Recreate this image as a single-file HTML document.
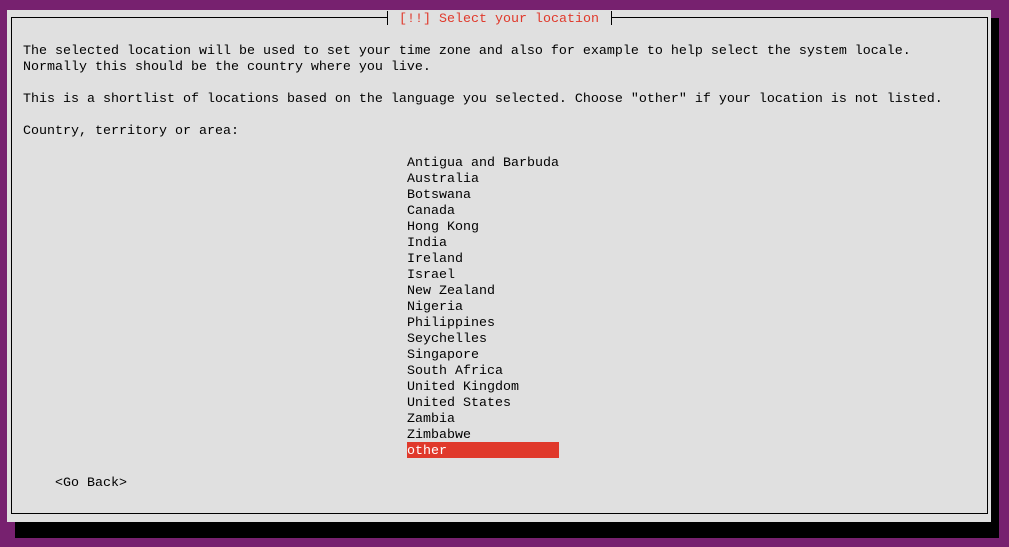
<!DOCTYPE html>
<html><head><meta charset="utf-8"><style>
html,body{margin:0;padding:0;}
body{width:1009px;height:547px;background:#77216f;position:relative;overflow:hidden;
font-family:"Liberation Mono","DejaVu Sans Mono",monospace;font-size:13.33px;line-height:16px;color:#000;}
.sh{position:absolute;left:15px;top:18px;width:984px;height:520px;background:#000;}
.pn{position:absolute;left:7px;top:10px;width:984px;height:512px;background:#e0e0e0;}
.bd{position:absolute;left:11px;top:17px;width:975px;height:495px;border:1px solid #000;}
.t{position:absolute;white-space:pre;height:16px;margin-top:2px;}
.tb{position:absolute;left:387px;top:10px;width:224px;height:16px;background:#e0e0e0;}
.vb{position:absolute;top:11px;width:1px;height:14px;background:#000;}
.hl{position:absolute;left:407px;top:442px;width:152px;height:16px;background:#e0392b;}
</style></head><body>
<div class="sh"></div>
<div class="pn"></div>
<div class="bd"></div>
<div class="tb"></div>
<div class="vb" style="left:387px"></div>
<div class="vb" style="left:611px"></div>
<div class="t" style="left:399px;top:10px;color:#e0392b">[!!] Select your location</div>
<div class="t" style="left:23px;top:42px">The selected location will be used to set your time zone and also for example to help select the system locale.</div>
<div class="t" style="left:23px;top:58px">Normally this should be the country where you live.</div>
<div class="t" style="left:23px;top:90px">This is a shortlist of locations based on the language you selected. Choose "other" if your location is not listed.</div>
<div class="t" style="left:23px;top:122px">Country, territory or area:</div>
<div class="hl"></div>
<div class="t" style="left:407px;top:154px">Antigua and Barbuda
Australia
Botswana
Canada
Hong Kong
India
Ireland
Israel
New Zealand
Nigeria
Philippines
Seychelles
Singapore
South Africa
United Kingdom
United States
Zambia
Zimbabwe
<span style="color:#fff">other</span></div>
<div class="t" style="left:55px;top:474px">&lt;Go Back&gt;</div>
</body></html>
